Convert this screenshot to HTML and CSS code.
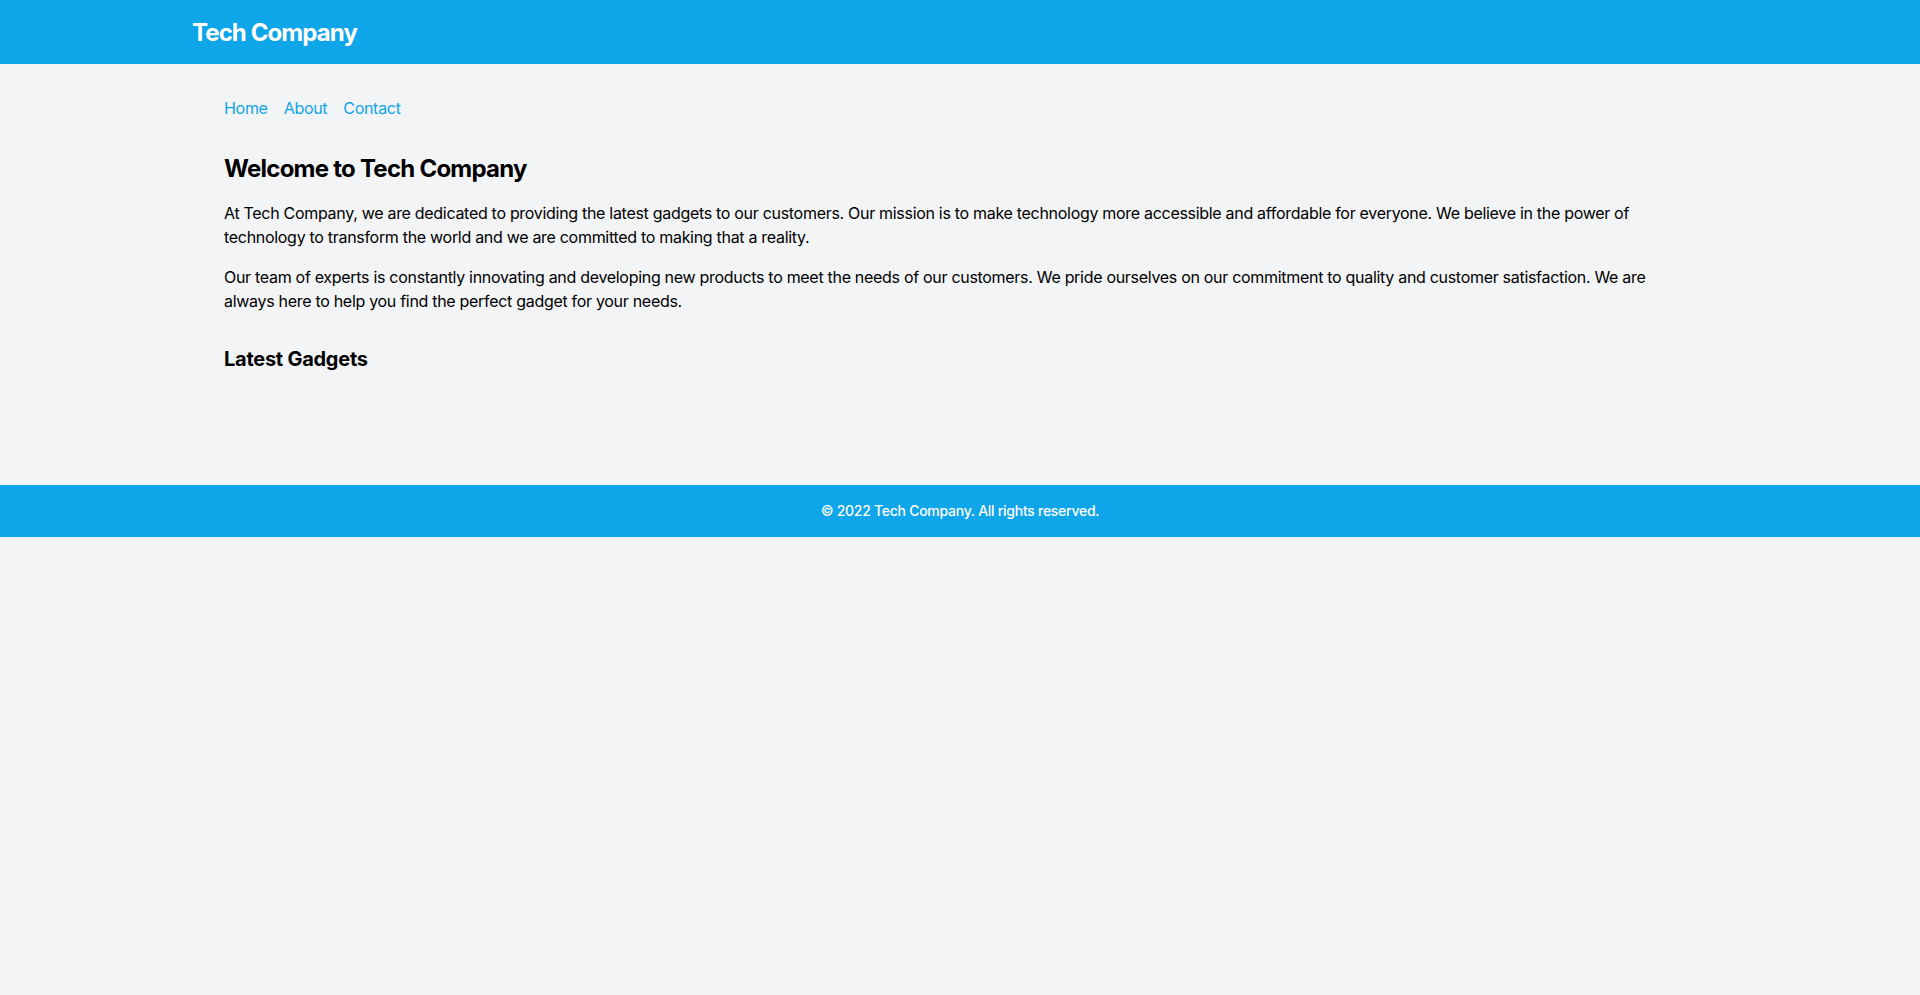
FILE: index.html
```html
<!DOCTYPE html>
<html lang="en">
<head>
<meta charset="utf-8">
<title>Tech Company</title>
<link rel="stylesheet" href="styles.css">
</head>
<body>
<header class="site-header">
  <div class="container">
    <h1 class="brand">Tech Company</h1>
  </div>
</header>
<main class="container main">
  <nav class="nav">
    <a href="#">Home</a>
    <a href="#">About</a>
    <a href="#">Contact</a>
  </nav>
  <h2 class="title">Welcome to Tech Company</h2>
  <p class="text">At Tech Company, we are dedicated to providing the latest gadgets to our customers. Our mission is to make technology more accessible and affordable for everyone. We believe in the power of technology to transform the world and we are committed to making that a reality.</p>
  <p class="text">Our team of experts is constantly innovating and developing new products to meet the needs of our customers. We pride ourselves on our commitment to quality and customer satisfaction. We are always here to help you find the perfect gadget for your needs.</p>
  <section class="gadgets">
    <h3 class="subtitle">Latest Gadgets</h3>
    <div class="grid"></div>
  </section>
</main>
<footer class="site-footer">
  <p>© 2022 Tech Company. All rights reserved.</p>
</footer>
</body>
</html>
```
FILE: styles.css
```css
* { box-sizing: border-box; }
html, body { margin: 0; padding: 0; }
body {
  background: #f3f4f6;
  font-family: Inter, "Noto Sans", sans-serif;
  color: #000;
  min-height: 100vh;
}
.container {
  max-width: 1536px;
  margin: 0 auto;
}
.site-header {
  background: #0ea5e9;
  padding: 17px 0 15px;
}
.brand {
  margin: 0;
  color: #fff;
  font-size: 24px;
  line-height: 32px;
  font-weight: 700;
  letter-spacing: -0.9px;
}
.main {
  padding: 32px 32px 112px;
}
.nav {
  display: flex;
  gap: 16px;
  margin-bottom: 33px;
}
.nav a {
  color: #0ea5e9;
  text-decoration: none;
  font-size: 16px;
  line-height: 24px;
  letter-spacing: -0.3px;
}
.title {
  margin: 0 0 16px;
  font-size: 24px;
  line-height: 32px;
  font-weight: 700;
  letter-spacing: -0.75px;
}
.text {
  margin: 0 0 16px;
  font-size: 16px;
  line-height: 24px;
  letter-spacing: -0.3px;
}
.gadgets { margin-top: 32px; }
.subtitle {
  margin: 0;
  font-size: 20px;
  line-height: 28px;
  font-weight: 700;
  letter-spacing: -0.26px;
}
.site-footer {
  background: #0ea5e9;
  color: #fff;
  text-align: center;
  padding: 16px 0;
}
.site-footer p {
  margin: 0;
  font-size: 14px;
  line-height: 20px;
  font-weight: 500;
  letter-spacing: -0.27px;
}
```
